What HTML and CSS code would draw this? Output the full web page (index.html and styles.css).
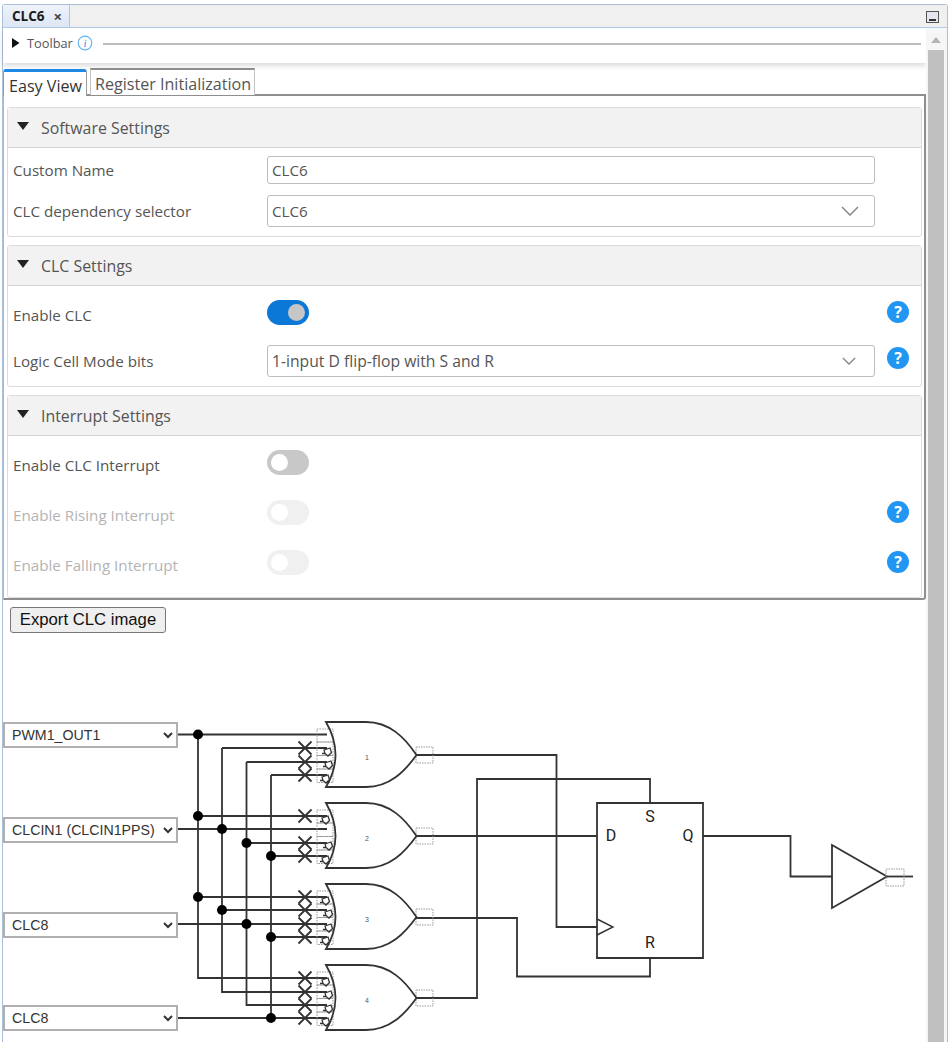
FILE: index.html
```html
<!DOCTYPE html>
<html lang="en">
<head>
<meta charset="utf-8">
<title>CLC6</title>
<link rel="stylesheet" href="styles.css">
</head>
<body>
<div class="window">
  <div class="tabbar">
    <div class="doc-tab"><span class="doc-name">CLC6</span><span class="doc-close">×</span></div>
    <div class="min-btn"><span></span></div>
  </div>
  <div class="work">
    <div class="main">
      <div class="toolbar">
        <svg class="tb-arrow" width="8" height="10" viewBox="0 0 8 10"><path d="M0 0L7.500 5L0 10Z"/></svg>
        <span class="tb-label">Toolbar</span>
        <svg class="tb-info" width="16" height="16" viewBox="0 0 16 16"><circle cx="8" cy="8" r="6.800"/><text x="8" y="12" text-anchor="middle">i</text></svg>
        <span class="tb-line"></span>
      </div>
      <div class="tabs">
        <div class="tab active">Easy View</div>
        <div class="tab">Register Initialization</div>
      </div>
      <div class="panel">
        <section class="sec">
          <div class="sec-head"><span class="tri"></span>Software Settings</div>
          <div class="sec-body b1">
            <div class="row"><label class="lbl">Custom Name</label><div class="field h28">CLC6</div></div>
            <div class="row"><label class="lbl">CLC dependency selector</label><div class="field h32">CLC6<svg class="chev big" viewBox="0 0 18 10"><path d="M1 1L9 9L17 1"/></svg></div></div>
          </div>
        </section>
        <section class="sec">
          <div class="sec-head"><span class="tri"></span>CLC Settings</div>
          <div class="sec-body b2">
            <div class="row"><label class="lbl low">Enable CLC</label><div class="toggle on"></div><span class="help">?</span></div>
            <div class="row"><label class="lbl">Logic Cell Mode bits</label><div class="field h32 wide">1-input D flip-flop with S and R<svg class="chev" viewBox="0 0 16 9"><path d="M1 1L8 8L15 1"/></svg></div><span class="help up">?</span></div>
          </div>
        </section>
        <section class="sec last">
          <div class="sec-head"><span class="tri"></span>Interrupt Settings</div>
          <div class="sec-body b3">
            <div class="row"><label class="lbl low">Enable CLC Interrupt</label><div class="toggle"></div></div>
            <div class="row"><label class="lbl low dim">Enable Rising Interrupt</label><div class="toggle dis"></div><span class="help">?</span></div>
            <div class="row"><label class="lbl low dim">Enable Falling Interrupt</label><div class="toggle dis"></div><span class="help">?</span></div>
          </div>
        </section>
      </div>
      <button class="export" type="button">Export CLC image</button>
      <div class="diagram">
        <select class="pin p1"><option>PWM1_OUT1</option></select>
        <select class="pin p2"><option>CLCIN1 (CLCIN1PPS)</option></select>
        <select class="pin p3"><option>CLC8</option></select>
        <select class="pin p4"><option>CLC8</option></select>
        <svg class="schem" width="922" height="408" viewBox="3 634 922 408">
          <defs>
            <g id="gate">
              <path class="dots" d="M317 729h16v13h-16zM317 742h16v13.500h-16zM317 755.500h16v13.500h-16zM317 769h16v13.500h-16z"/>
              <path class="dots" d="M416 747h17v16h-17z"/>
              <path class="wire" d="M326 722L366 722C390 722 405 738 416.500 755C405 771 390 787 366 787L326 787Q345 755 326 722Z"/>
            </g>
            <path id="x" class="wire" d="M-6.500 -6.500L6.500 6.500M-6.500 6.500L6.500 -6.500"/>
            <path id="g" class="wire hair" d="M-4 -2L2 -4L3.500 0.500L0 4L-3 1.500ZM-6 1.500L-3 1.500"/>
          </defs>

          <g class="wire">
            <path d="M178 734.500H327M198 734.500V978H327"/>
            <path d="M222 748V992H327M222 748H327"/>
            <path d="M246.500 762V1005H327M246.500 762H327"/>
            <path d="M271 775V1018H327M271 775H327"/>
            <path d="M198 816H327M178 829H327M246.500 843H327M271 856H327"/>
            <path d="M198 897H327M222 910H327M178 924H327M271 937H327"/>
            <path d="M222 992H327M178 1018H327"/>
            <path d="M416 755H556.500V927H597"/>
            <path d="M416 836H597"/>
            <path d="M416 918H517V976.500H650V958"/>
            <path d="M416 998H477V779H650V803"/>
            <path d="M597 803H703V958H597Z"/>
            <path class="thin" d="M597 919L613 927L597 935"/>
            <path d="M703 836H790.500V876.500H832"/>
            <path d="M832 845L887 876.500L832 908Z"/>
            <path d="M887 876.500H913"/>
          </g>
          <path class="dots" d="M886 869h18v17h-18z"/>

          <g class="node">
            <circle cx="198" cy="734.500" r="5"/><circle cx="198" cy="816" r="5"/><circle cx="222" cy="829" r="5"/><circle cx="246.500" cy="843" r="5"/><circle cx="271" cy="856" r="5"/>
            <circle cx="198" cy="897" r="5"/><circle cx="222" cy="910" r="5"/><circle cx="246.500" cy="924" r="5"/><circle cx="271" cy="937" r="5"/><circle cx="271" cy="1018" r="5"/>
          </g>

          <use href="#gate"/>
          <use href="#gate" y="81"/>
          <use href="#gate" y="162"/>
          <use href="#gate" y="243"/>

          <use href="#x" x="305" y="748"/><use href="#x" x="305" y="762"/><use href="#x" x="305" y="775"/>
          <use href="#x" x="305" y="816"/><use href="#x" x="305" y="843"/><use href="#x" x="305" y="856"/>
          <use href="#x" x="305" y="897"/><use href="#x" x="305" y="910"/><use href="#x" x="305" y="924"/><use href="#x" x="305" y="937"/>
          <use href="#x" x="305" y="978"/><use href="#x" x="305" y="992"/><use href="#x" x="305" y="1005"/><use href="#x" x="305" y="1018"/>

          <use href="#g" x="328" y="752"/><use href="#g" x="329" y="765"/><use href="#g" x="326" y="779"/>
          <use href="#g" x="326" y="820"/><use href="#g" x="329" y="846"/><use href="#g" x="326" y="860"/>
          <use href="#g" x="326" y="901"/><use href="#g" x="329" y="914"/><use href="#g" x="329" y="928"/><use href="#g" x="326" y="941"/>
          <use href="#g" x="326" y="982"/><use href="#g" x="329" y="995"/><use href="#g" x="329" y="1009"/><use href="#g" x="326" y="1022"/>

          <g class="gnum">
            <text x="367" y="760">1</text><text x="367" y="841">2</text><text x="367" y="922">3</text><text x="367" y="1003">4</text>
          </g>
          <g class="ff">
            <text x="650" y="822">S</text><text x="611" y="841">D</text><text x="688" y="841">Q</text><text x="650" y="948">R</text>
          </g>
        </svg>
      </div>
    </div>
    <div class="scrollbar"><svg class="sb-up" width="10" height="6" viewBox="0 0 10 6"><path d="M5 0L10 6H0Z"/></svg><div class="thumb"></div></div>
  </div>
</div>
</body>
</html>
```
FILE: styles.css
```css
* { box-sizing: border-box; }
html, body { margin: 0; height: 1042px; overflow: hidden; background: #fff; }
body { font-family: "Open Sans", "Noto Sans", sans-serif; color: #555; }

.window {
  margin: 4px 4px 0 2px;
  height: 1038px;
  border: 1px solid #a9c0d8;
  border-bottom: 0;
  border-radius: 3px 3px 0 0;
  display: flex;
  flex-direction: column;
}

.tabbar {
  height: 23px;
  flex: none;
  display: flex;
  justify-content: space-between;
  background: #f0f0f0;
  border-bottom: 1px solid #b4cde6;
}
.doc-tab {
  width: 67px;
  display: flex;
  align-items: center;
  padding-left: 9px;
  background: linear-gradient(#eef2fa, #dde6f5);
  border-right: 1px solid #b4c4dc;
  color: #1a1a1a;
}
.doc-name { font-size: 13.500px; font-weight: 700; }
.doc-close { font-size: 15px; font-weight: 700; margin-left: 9px; color: #444; }
.min-btn {
  width: 13px;
  height: 12px;
  margin: 6px 8px 0 0;
  border: 1px solid #555;
  background: #e4e8ee;
  position: relative;
}
.min-btn span {
  position: absolute;
  left: 2px;
  right: 2px;
  bottom: 1px;
  height: 2px;
  background: #333;
}

.work { flex: 1; display: flex; min-height: 0; }
.main { width: 923px; flex: none; }

.toolbar {
  height: 35px;
  display: flex;
  align-items: center;
  padding: 0 5px 5px 9px;
  box-shadow: 0 3px 5px rgba(0, 0, 0, .14);
  background: #fff;
}
.tb-arrow { fill: #111; margin-bottom: 1px; }
.tb-label { font-size: 12.800px; margin-left: 7px; color: #555; }
.tb-info { margin-left: 4px; }
.tb-info circle { fill: none; stroke: #64b5f6; stroke-width: 1.200; }
.tb-info text { font: italic 11px "Liberation Serif", serif; fill: #2a8fe8; }
.tb-line { flex: 1; height: 2px; background: #bdbdbd; margin-left: 10px; margin-top: 1px; }

.tabs {
  display: flex;
  align-items: flex-end;
  gap: 3px;
  height: 32px;
  padding-top: 5px;
  position: relative;
  z-index: 1;
}
.tab {
  height: 27px;
  width: 165px;
  padding-left: 4px;
  font-size: 16.100px;
  line-height: 28px;
  border: 1px solid #c4c4c4;
  border-top: 2px solid #8c8c8c;
  border-bottom: 0;
  background: #fff;
  white-space: nowrap;
  color: #555;
}
.tab.active {
  width: 84px;
  height: 27px;
  padding-left: 5px;
  line-height: 28px;
  border-top: 3px solid #1e88e5;
  border-left-color: #9a9a9a;
  border-right-color: #9a9a9a;
  color: #333;
  margin-bottom: -1px;
  border-radius: 3px 3px 0 0;
}

.panel {
  width: 923px;
  height: 506px;
  border: 1px solid #8e8e8e;
  border-width: 2px 2px 2px 1px;
  border-left-color: #b6b6b6;
  padding: 11px 2px 0 3px;
  margin-top: -1px;
  border-radius: 0 0 3px 0;
}
.sec {
  border: 1px solid #dcdcdc;
  border-radius: 3px;
  margin-bottom: 8px;
}
.sec.last { margin-bottom: 0; }
.sec-head {
  height: 40px;
  background: #f2f2f2;
  border-bottom: 1px solid #d4d4d4;
  display: flex;
  align-items: center;
  padding-left: 9px;
  padding-top: 1px;
  font-size: 15.900px;
  color: #555;
}
.tri {
  width: 0;
  height: 0;
  border: 6.500px solid transparent;
  border-top: 8px solid #222;
  border-bottom: 0;
  margin-right: 12px;
  margin-top: -4px;
}
.sec-body { display: flex; flex-direction: column; padding-left: 5px; }
.b1 { padding-top: 8px; padding-bottom: 9px; gap: 11px; }
.b2 { padding-top: 14px; padding-bottom: 9px; gap: 20px; }
.b3 { padding-top: 14px; gap: 25px; height: 161px; }

.row { display: flex; align-items: center; }
.lbl { width: 254px; flex: none; font-size: 15.200px; color: #555; }
.lbl.low { padding-top: 5px; }
.lbl.dim { color: #b4b4b4; }

.field {
  width: 608px;
  flex: none;
  border: 1px solid #bdbdbd;
  border-radius: 3px;
  display: flex;
  align-items: center;
  justify-content: space-between;
  padding: 0 15px 0 4px;
  font-size: 15.200px;
  color: #555;
  background: #fff;
}
.field.wide { font-size: 15.700px; padding-right: 18px; }
.field.wide .chev { width: 14px; height: 8px; }
.h28 { height: 28px; }
.h32 { height: 32px; }
.chev { width: 16px; height: 9px; fill: none; stroke: #888; stroke-width: 1.500; }
.chev.big { width: 18px; height: 10px; }

.toggle {
  width: 42px;
  height: 25px;
  flex: none;
  border-radius: 13px;
  background: #c8c8c8;
  position: relative;
}
.toggle::after {
  content: "";
  position: absolute;
  left: 4px;
  top: 4px;
  width: 17px;
  height: 17px;
  border-radius: 50%;
  background: #fff;
}
.toggle.on { background: #0b78d7; }
.toggle.on::after { left: 21px; background: #c6c6c6; }
.toggle.dis { background: #f0f0f0; }

.help {
  width: 22px;
  height: 22px;
  flex: none;
  border-radius: 50%;
  background: #2196f3;
  color: #fff;
  font-size: 16px;
  font-weight: 700;
  line-height: 22px;
  text-align: center;
  margin-left: auto;
  margin-right: 12px;
  margin-bottom: 2px;
}
.help.up { margin-bottom: 6px; }

.export {
  display: block;
  width: 156px;
  height: 26px;
  margin: 7px 0 0 7px;
  padding: 0;
  background: #efefef;
  border: 1px solid #767676;
  border-radius: 3px;
  font-family: "Liberation Sans", Arial, sans-serif;
  font-size: 16.700px;
  color: #111;
}

.diagram { position: relative; height: 408px; margin-top: 1px; }
.schem { display: block; }
.pin {
  position: absolute;
  left: 0;
  width: 175px;
  height: 26px;
  padding: 0 0 0 3px;
  border: 2px solid #b0b0b0;
  border-radius: 0;
  background: #fff;
  font-family: "Liberation Sans", Arial, sans-serif;
  font-size: 14.200px;
  color: #333;
  z-index: 1;
}
.p1 { top: 88px; }
.p2 { top: 183px; }
.p3 { top: 278px; }
.p4 { top: 371px; }

.wire { fill: none; stroke: #333; stroke-width: 1.800; }
.wire .thin, .thin { stroke-width: 1.400; }
.hair { stroke-width: 1.300; }
.dots { fill: none; stroke: #999; stroke-width: 1; stroke-dasharray: 1.500 1; }
.node { fill: #000; }
.gnum text { font: 7px "Liberation Sans", Arial, sans-serif; fill: #556; text-anchor: middle; }
.ff text { font: 16px Roboto, "Liberation Sans", sans-serif; fill: #222; text-anchor: middle; }

.scrollbar {
  width: 21px;
  padding: 0 3px 0 2px;
  background: #f6f6f6;
  display: flex;
  flex-direction: column;
  align-items: center;
}
.sb-up { fill: #b4b4b4; margin-top: 9px; flex: none; }
.thumb { width: 100%; flex: 1; background: #c0c0c0; margin-top: 7px; }
```
